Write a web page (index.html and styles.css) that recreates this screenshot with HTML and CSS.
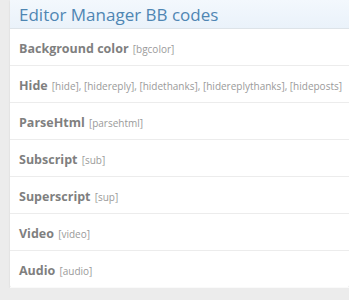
FILE: index.html
```html
<!DOCTYPE html>
<html lang="en">
<head>
    <meta charset="UTF-8">
    <title>Editor Manager BB codes</title>
    <link rel="stylesheet" href="styles.css">
</head>
<body>
    <div class="panel">
        <h2 class="panel-title">Editor Manager BB codes</h2>
        <ul class="bbcode-list">
            <li><b>Background color</b> <span class="tag">[bgcolor]</span></li>
            <li><b>Hide</b> <span class="tag">[hide], [hidereply], [hidethanks], [hidereplythanks], [hideposts]</span></li>
            <li><b>ParseHtml</b> <span class="tag">[parsehtml]</span></li>
            <li><b>Subscript</b> <span class="tag">[sub]</span></li>
            <li><b>Superscript</b> <span class="tag">[sup]</span></li>
            <li><b>Video</b> <span class="tag">[video]</span></li>
            <li><b>Audio</b> <span class="tag">[audio]</span></li>
        </ul>
    </div>
</body>
</html>
```

FILE: styles.css
```css
body {
    margin: 0;
    background: #ececec;
    font-family: "Open Sans", "Noto Sans", sans-serif;
    padding: 0 0 0 10px;
    overflow: hidden;
}
.panel {
    background: #fff;
    border-radius: 0 0 3px 3px;
    box-shadow: 0 1px 2px rgba(0, 0, 0, 0.12);
}
.panel-title {
    margin: 0;
    height: 28px;
    padding: 0 9px;
    font-size: 17px;
    font-weight: normal;
    line-height: 29px;
    color: #4f86b3;
    background: linear-gradient(#f3f8fd, #eaf2fa);
    border-bottom: 1px solid #dde3e8;
}
.bbcode-list {
    list-style: none;
    margin: 0;
    padding: 0;
}
.bbcode-list li {
    height: 36px;
    line-height: 37px;
    padding: 0 9px;
    border-bottom: 1px solid #ececec;
    white-space: nowrap;
    overflow: hidden;
}
.bbcode-list li:last-child {
    border-bottom-color: #fafafa;
}
.bbcode-list b {
    font-size: 12.5px;
    color: #7f7f7f;
}
.tag {
    font-size: 10px;
    color: #9a9a9a;
}
```
